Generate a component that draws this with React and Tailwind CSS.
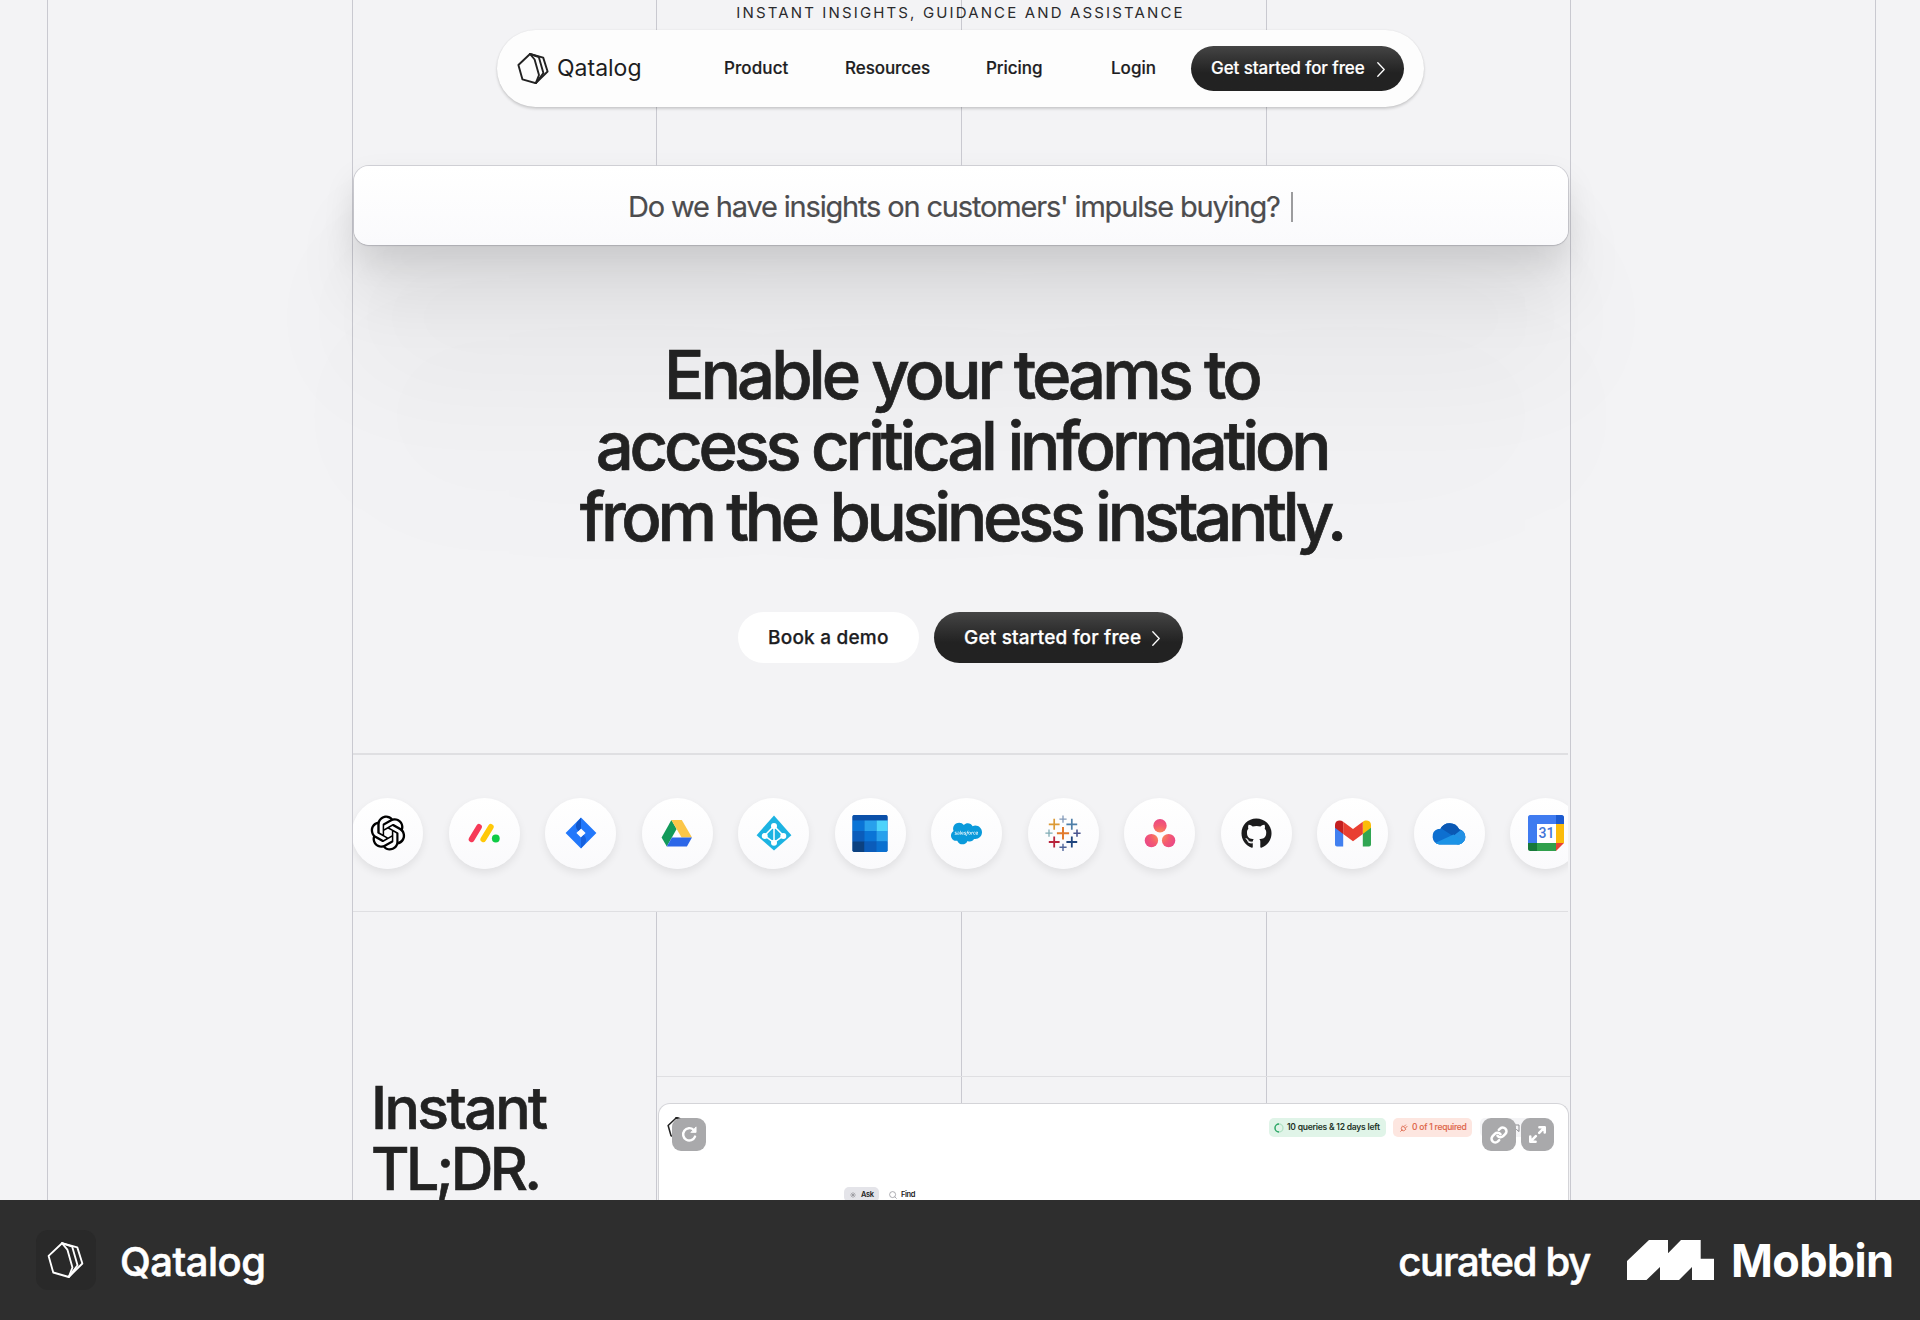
import React from "react";
import { RiOpenaiFill } from "react-icons/ri";
import { FaSalesforce, FaGithub } from "react-icons/fa";

function QatalogMark({ className, stroke = "#222", width = 1.9 }) {
  return (
    <svg viewBox="0 0 32 31" className={className} fill="none" stroke={stroke} strokeWidth={width} strokeLinejoin="round" strokeLinecap="round">
      <path d="M13 1 1.4 12 5.4 26.3 18.8 30.2 22 22 17.6 6.5z" />
      <path d="M13 1 21.8 4 26.4 20 18.8 30.2" />
      <path d="M13 1 26.2 4.6 30.6 18.5 18.8 30.2" />
    </svg>
  );
}

function Chevron({ className }) {
  return (
    <svg viewBox="0 0 8 15" className={className} fill="none" stroke="#fff" strokeWidth="1.3" strokeLinecap="round" strokeLinejoin="round">
      <path d="M0.8 0.8 7.2 7.5 0.8 14.2" />
    </svg>
  );
}

function Monday() {
  return (
    <svg viewBox="0 0 36 36" className="size-9" fill="none" strokeLinecap="round" strokeWidth="5.8">
      <path d="M5.6 24.2 13 11.9" stroke="#f63a58" />
      <path d="M17.3 24.2 24.8 11.9" stroke="#ffc808" />
      <circle cx="29.8" cy="23.5" r="3.9" fill="#0fcb45" />
    </svg>
  );
}

function Jira() {
  return (
    <svg viewBox="0 0 36 36" className="size-9">
      <path fillRule="evenodd" d="M18 2.6 33.4 18 18 33.4 2.6 18zM18 13.4 13.4 18l4.6 4.6 4.6-4.6z" fill="#2278fb" />
      <path d="M18 2.8v10.6l-2.6 2.6c-3-2.6-3-6-1.2-9z" fill="#0f55c9" />
      <path d="M18 33.2V22.6l2.6-2.6c3 2.6 3 6 1.2 9z" fill="#1761dd" />
    </svg>
  );
}

function Drive() {
  return (
    <svg viewBox="0 0 36 36" className="size-9">
      <path d="M2.6 22.5 12.4 5l5.2 9L7.8 31.5z" fill="#129a5a" />
      <path d="M12.4 5h10.4l10.2 17.5H22.6z" fill="#fbc648" />
      <path d="M7.8 31.5 12.9 22.5H33l-5.1 9z" fill="#2c67e8" />
    </svg>
  );
}

function AzureAD() {
  return (
    <svg viewBox="0 0 36 36" className="size-9">
      <path d="M18 0.6 35.4 20.2 18 35.4 0.6 20.2z" fill="#1cb3e2" />
      <g fill="none" stroke="#fff" strokeWidth="1.5">
        <path d="M18 11v17M18 11 8.5 20.7 18 27.5l9.5-6.8z" />
      </g>
      <g fill="#fff">
        <circle cx="18" cy="11" r="3" />
        <circle cx="8.7" cy="20.9" r="3" />
        <circle cx="27.3" cy="20.9" r="3" />
        <circle cx="18" cy="27.8" r="3" />
      </g>
    </svg>
  );
}

function OutlookCalendar() {
  return (
    <svg viewBox="0 0 36 37" className="h-[37px] w-9">
      <clipPath id="ocal"><rect x="0.5" width="35" height="37" rx="1.8" /></clipPath>
      <g clipPath="url(#ocal)">
        <rect width="36" height="37" fill="#0a5cba" />
        <rect width="36" height="5.5" fill="#0a4fa8" />
        <rect x="0" y="5.5" width="12.5" height="10.5" fill="#0a74d6" />
        <rect x="12.5" y="5.5" width="12" height="10.5" fill="#28a0ec" />
        <rect x="24.5" y="5.5" width="12" height="10.5" fill="#4dd3fb" />
        <rect x="0" y="16" width="12.5" height="10.5" fill="#0b5cba" />
        <rect x="12.5" y="16" width="12" height="10.5" fill="#0a74d6" />
        <rect x="24.5" y="16" width="12" height="10.5" fill="#28a0ec" />
        <rect x="0" y="26.5" width="12.5" height="11" fill="#0c4180" />
        <rect x="12.5" y="26.5" width="12" height="11" fill="#0b5cba" />
        <rect x="24.5" y="26.5" width="12" height="11" fill="#0a70d0" />
      </g>
    </svg>
  );
}

function Tableau() {
  return (
    <svg viewBox="0 0 36 36" className="size-9" fill="none">
      <path d="M18 12v12.5M11.9 18.2h12.2" stroke="#e27a2c" strokeWidth="2" />
      <path d="M9.2 3.8v11M3.8 9.3h10.8" stroke="#dc9a36" strokeWidth="1.7" />
      <path d="M26.8 3.8v11M21.4 9.3h10.8" stroke="#4e7fa8" strokeWidth="1.7" />
      <path d="M9.2 21.5v11M3.8 27h10.8" stroke="#b8243c" strokeWidth="1.8" />
      <path d="M26.8 21.5v11M21.4 27h10.8" stroke="#1f457e" strokeWidth="1.8" />
      <path d="M18 0.6v7.2M14.4 4.2h7.2" stroke="#8299b8" strokeWidth="1.3" />
      <path d="M18 28.7v7.2M14.4 32.3h7.2" stroke="#50659a" strokeWidth="1.4" />
      <path d="M4 14.6v7.2M0.4 18.2h7.2" stroke="#7fabb4" strokeWidth="1.3" />
      <path d="M32 14.6v7.2M28.4 18.2h7.2" stroke="#4a5590" strokeWidth="1.6" />
    </svg>
  );
}

function Asana() {
  return (
    <svg viewBox="0 0 36 36" className="size-9">
      <radialGradient id="asana" gradientUnits="userSpaceOnUse" cx="18" cy="20" r="16">
        <stop offset="0" stopColor="#fb9a4c" />
        <stop offset="0.6" stopColor="#f45a70" />
        <stop offset="1" stopColor="#ea4a85" />
      </radialGradient>
      <g fill="url(#asana)">
        <circle cx="18" cy="10.8" r="6.7" />
        <circle cx="9.4" cy="25.6" r="6.7" />
        <circle cx="26.6" cy="25.6" r="6.7" />
      </g>
    </svg>
  );
}

function Gmail() {
  return (
    <svg viewBox="0 0 36 36" className="size-9">
      <path d="M0 10v19.5c0 1.200.9 2 2 2h6.200V13z" fill="#4180f0" />
      <path d="M36 10v19.5c0 1.200-.9 2-2 2h-6.200V13z" fill="#30a552" />
      <path d="M27.8 6.7c3-2.6 8.200-1.2 8.200 3v3l-8.200 6.300z" fill="#fbbc08" />
      <path d="M8.2 6.7C5 4.1 0 5.5 0 9.7v3L8.2 19z" fill="#c31f20" />
      <path d="M8.2 19V6.7L18 14l9.800-7.300V19L18 26.200z" fill="#e93f32" />
    </svg>
  );
}

function OneDrive() {
  return (
    <svg viewBox="0 0 36 36" className="size-9">
      <clipPath id="cloud">
        <path d="M8.5 29.5A8 8 0 0 1 7 14c.8 0 1.7-.1 2.3-.2A10.6 10.6 0 0 1 28.2 14.2 7.8 7.8 0 0 1 28 29.5z" />
      </clipPath>
      <g clipPath="url(#cloud)">
        <rect width="36" height="36" fill="#0d6fd0" />
        <path d="M9 0h27v14l-7 2-7 5L8 12z" fill="#0a58b4" />
        <path d="M23 20.5 36 10v26h-8z" fill="#2390e4" />
        <path d="M2 29 22.5 19.5 35 28v8H2z" fill="#1c93e6" />
      </g>
    </svg>
  );
}

function GoogleCalendar() {
  return (
    <svg viewBox="0 0 36 36" className="size-9">
      <path d="M2 0h26v9H9v19H0V2c0-1 1-2 2-2z" fill="#3f7bf0" />
      <path d="M28 0h6c1 0 2 1 2 2v7h-8z" fill="#1d5bd0" />
      <path d="M28 9h8v19h-8z" fill="#fbbb0a" />
      <path d="M9 28h19v8H9z" fill="#30a04c" />
      <path d="M0 28h9v8H2c-1 0-2-1-2-2z" fill="#17793a" />
      <path d="M28 28h8l-8 8z" fill="#e84334" />
      <path d="M9 9h19v19H9z" fill="#fff" />
      <text x="18.5" y="23.3" textAnchor="middle" fontFamily="Roboto, sans-serif" fontWeight="500" fontSize="14" fill="#3f74d8">31</text>
    </svg>
  );
}

const logos = [
  <RiOpenaiFill className="size-[42px] text-black" />,
  <Monday />,
  <Jira />,
  <Drive />,
  <AzureAD />,
  <OutlookCalendar />,
  <FaSalesforce className="size-[31px] text-[#0a9adb]" />,
  <Tableau />,
  <Asana />,
  <FaGithub className="size-[31px] text-[#1b1b1c]" />,
  <Gmail />,
  <OneDrive />,
  <GoogleCalendar />,
];

function OverlayButton({ className, children }) {
  return (
    <div className={`absolute top-[14px] flex h-[33px] items-center justify-center rounded-[9px] bg-[#a9a9ab] ${className}`}>{children}</div>
  );
}

function TopSection() {
  return (
    <section className="relative h-[166px]">
      <div className="absolute inset-0 flex">
        <div className="w-[304px] border-r border-[#c9c9d0]" />
        <div className="w-[305px] border-r border-[#c9c9d0]" />
        <div className="w-[305px] border-r border-[#c9c9d0]" />
      </div>
      <div className="relative">
        <p className="pr-[2px] text-center text-[15px] leading-[25px] tracking-[2.14px] text-[#2b2b2d]">
          INSTANT INSIGHTS, GUIDANCE AND ASSISTANCE
        </p>
        <nav className="mt-[5px] ml-[144px] flex h-[77px] w-[927px] items-center rounded-full bg-[#fdfdfd] pl-[20px] text-[17px] font-medium text-[#1d1d1f] shadow-[0_2px_3px_rgba(0,0,0,0.16),0_0_2px_rgba(0,0,0,0.08)] [-webkit-text-stroke:0.2px]">
          <QatalogMark className="h-[31px] w-[32px]" />
          <span className="ml-[8px] w-[90px] text-[23px] font-normal [-webkit-text-stroke:0]">Qatalog</span>
          <span className="ml-[77px] w-[67px] tracking-[0.1px]">Product</span>
          <span className="ml-[54px] w-[87px] tracking-[-0.06px]">Resources</span>
          <span className="ml-[54px] w-[58px] tracking-[-0.05px]">Pricing</span>
          <span className="ml-[67px] w-[45px]">Login</span>
          <div className="ml-[35px] flex h-[45px] w-[213px] items-center rounded-full bg-linear-to-b from-[#454545] to-[#222] to-60% pt-px pl-[20px] text-white">
            <span className="w-[155px] tracking-[-0.08px] whitespace-nowrap">Get started for free</span>
            <Chevron className="ml-[11px] h-[15px] w-[8px]" />
          </div>
        </nav>
      </div>
    </section>
  );
}

function Hero() {
  return (
    <section className="h-[587px]">
      <div className="ml-px flex h-[79px] w-[1214px] items-center rounded-[15px] bg-linear-to-b from-white to-[#fafafc] pt-[3px] pl-[274px] shadow-[0_0_0_1px_rgba(150,150,160,0.35),0_210px_190px_rgba(0,0,0,0.035),0_112px_130px_rgba(0,0,0,0.06),0_52px_64px_rgba(0,0,0,0.08),0_15px_32px_rgba(0,0,0,0.1),0_1px_2px_rgba(0,0,0,0.1)]">
        <span className="w-[657px] text-[29px] tracking-[-1.17px] whitespace-nowrap text-[#4c4c4e] [-webkit-text-stroke:0.2px]">
          Do we have insights on customers' impulse buying?
        </span>
        <span className="ml-[6px] h-[30px] w-[2px] bg-[#9c9c9e]" />
      </div>
      <h1 className="pt-[94px] text-center text-[67px] leading-[71px] font-medium whitespace-nowrap text-[#222] [-webkit-text-stroke:0.7px]">
        <span className="block tracking-[-3.88px]">Enable your teams to</span>
        <span className="block tracking-[-4.2px]">access critical information</span>
        <span className="block tracking-[-4.3px]">from the business instantly.</span>
      </h1>
      <div className="mt-[60px] flex gap-[15px] pl-[385px] text-[19px] font-medium [-webkit-text-stroke:0.25px]">
        <div className="flex h-[51px] w-[181px] items-center rounded-full bg-white pt-[2px] pl-[30px] tracking-[0.22px] text-[#1d1d1f]">
          Book a demo
        </div>
        <div className="flex h-[51px] w-[249px] items-center rounded-full bg-linear-to-b from-[#454545] to-[#222] to-60% pt-[2px] pl-[30px] text-white">
          <span className="w-[178px] tracking-[0.19px] whitespace-nowrap">Get started for free</span>
          <Chevron className="ml-[10px] h-[15px] w-[8px]" />
        </div>
      </div>
    </section>
  );
}

function LogoStrip() {
  return (
    <section className="h-[159px] w-[1215px] overflow-hidden border-t-2 border-b border-[#dfdfe2]">
      <div className="-ml-px flex h-full items-center gap-[25.5px]">
        {logos.map((logo, i) => (
          <div key={i} className="flex size-[71px] shrink-0 items-center justify-center rounded-full bg-linear-to-b from-white to-[#fafafc] shadow-[0_4px_8px_rgba(0,0,0,0.08)]">
            {logo}
          </div>
        ))}
      </div>
    </section>
  );
}

function Guides({ className }) {
  return (
    <div className={`flex ${className}`}>
      <div className="w-[305px] border-r border-[#c9c9d0]" />
      <div className="w-[305px] border-r border-[#c9c9d0]" />
    </div>
  );
}

function DemoCard() {
  return (
    <div className="relative ml-px h-[97px] w-[911px] rounded-t-[12px] border border-b-0 border-[#d4d4d8] bg-white">
      <div className="flex h-[47px] items-center pl-[8px]">
        <QatalogMark className="h-[22px] w-[23px]" width={2.2} />
        <div className="ml-[579px] flex h-[19px] w-[117px] items-center rounded-[5px] bg-[#e0f4e8] pl-[5px] text-[8.5px] font-semibold tracking-[-0.22px] whitespace-nowrap text-[#1d3327]">
          <svg viewBox="0 0 10 10" className="mr-[3px] size-[10px]" fill="none" strokeWidth="1.4">
            <circle cx="5" cy="5" r="4" stroke="#b4e2c6" />
            <path d="M5 1A4 4 0 0 0 5 9" stroke="#2fa868" />
          </svg>
          10 queries &amp; 12 days left
        </div>
        <div className="ml-[7px] flex h-[19px] w-[79px] items-center rounded-[5px] bg-[#fde6e0] pl-[7px] text-[8.5px] font-medium tracking-[-0.24px] whitespace-nowrap text-[#dd6549] [-webkit-text-stroke:0.1px]">
          <svg viewBox="0 0 10 10" className="mr-[4px] size-[8px] shrink-0" fill="none" stroke="#dd6549" strokeWidth="1.1" strokeLinecap="round">
            <path d="M0.8 9.2 2.6 7.400M3.600 2.600 7.400 6.400 6 7.800a2.700 2.700 0 0 1-3.800-3.800zM5.200 3 7 1.200M7 4.800 8.800 3" />
          </svg>
          0 of 1 required
        </div>
        <div className="ml-[8px] flex h-[19px] w-[72px] items-center rounded-[5px] bg-[#f4f4f6] pl-[32px]">
          <svg viewBox="0 0 8 8" className="size-[8px]" fill="none" stroke="#8d8d91" strokeWidth="1">
            <path d="M1 1h6v6.5L4.5 5.5H1z" />
          </svg>
        </div>
      </div>
      <OverlayButton className="left-[13px] w-[34px]">
        <svg viewBox="0 0 16 16" className="size-[17px]" fill="none" stroke="#fff" strokeWidth="2.3" strokeLinecap="round" strokeLinejoin="round">
          <path d="M13.2 10A5.8 5.8 0 1 1 11.8 3.6" />
          <path d="M14.2 1.2V6H9.6z" fill="#fff" strokeWidth="0.8" />
        </svg>
      </OverlayButton>
      <OverlayButton className="left-[823px] w-[34px]">
        <svg viewBox="0 0 24 24" className="size-[18px]" fill="none" stroke="#fff" strokeWidth="3.4" strokeLinecap="round" strokeLinejoin="round">
          <path d="M10 13a5 5 0 0 0 7.54.54l3-3a5 5 0 0 0-7.07-7.07l-1.72 1.71" />
          <path d="M14 11a5 5 0 0 0-7.54-.54l-3 3a5 5 0 0 0 7.07 7.07l1.71-1.71" />
        </svg>
      </OverlayButton>
      <OverlayButton className="left-[862px] w-[33px]">
        <svg viewBox="0 0 16 16" className="size-[17px]" fill="none" stroke="#fff" strokeWidth="2.4" strokeLinecap="round" strokeLinejoin="round">
          <path d="M9.8 1.2h5v5M14.4 1.6 9.6 6.4M6.2 14.8h-5v-5M1.6 14.4l4.800-4.800" />
        </svg>
      </OverlayButton>
      <div className="mt-[36px] ml-[185px] flex h-[13px] items-start text-[7.5px] leading-[13px] font-semibold tracking-[-0.4px] text-[#222]">
        <div className="flex h-[15px] w-[35px] items-center rounded-[5px] bg-[#e4e4e9] pl-[6px]">
          <svg viewBox="0 0 8 8" className="mr-[5px] size-[6px]" stroke="#8b8b92" strokeWidth="0.8">
            <path d="M4 0v8M0 4h8M1.2 1.2l5.600 5.600M6.8 1.2 1.2 6.8" />
          </svg>
          Ask
        </div>
        <div className="ml-[10px] flex h-[15px] items-center">
          <svg viewBox="0 0 8 8" className="mr-[4px] size-[8px]" fill="none" stroke="#8b8b92" strokeWidth="0.7">
            <circle cx="3.6" cy="3.6" r="3" />
            <path d="M5.8 5.8 7.7 7.7" />
          </svg>
          Find
        </div>
      </div>
    </div>
  );
}

function FeatureSection() {
  return (
    <section className="flex h-[288px] overflow-hidden">
      <div className="w-[304px] shrink-0 border-r border-[#c9c9d0] pt-[165px] pl-[18px] text-[59px] leading-[61px] font-medium text-[#222] [-webkit-text-stroke:0.6px]">
        <h2>
          <span className="block tracking-[-2.6px]">Instant</span>
          <span className="block tracking-[-3.6px]">TL;DR.</span>
        </h2>
      </div>
      <div className="w-[913px]">
        <Guides className="h-[165px] border-b border-[#dfdfe2]" />
        <Guides className="h-[26px]" />
        <DemoCard />
      </div>
    </section>
  );
}

function Footer() {
  return (
    <footer className="flex h-[120px] items-center bg-[#2e2e2e] text-[40px] font-medium text-white">
      <div className="ml-[36px] flex size-[60px] items-center justify-center rounded-[12px] bg-[#292929]">
        <QatalogMark className="mr-[2px] h-[36px] w-[37px]" stroke="#fff" width={1.6} />
      </div>
      <span className="ml-[24px] pt-[3px] tracking-[-0.5px] [-webkit-text-stroke:0.6px]">Qatalog</span>
      <span className="mr-[37px] ml-auto pt-[3px] tracking-[-1.25px] [-webkit-text-stroke:0.6px]">curated by</span>
      <svg viewBox="0 0 87 40" className="h-[40px] w-[87px]" fill="#fff">
        <path d="M0 21 22 0H41V13.3L54 0H73.7V18.7H87V40H65V27L52 40H33V27L19.5 40H0z" />
      </svg>
      <span className="mr-[26px] ml-[17px] w-[163px] pt-px text-[45px] font-bold tracking-[-0.69px]">Mobbin</span>
    </footer>
  );
}

export default function App() {
  return (
    <div className="h-[1320px] w-[1920px] overflow-hidden bg-[#f3f3f5] font-['Inter',sans-serif]">
      <main className="flex h-[1200px] pl-[47px]">
        <div className="w-[305px] border-l border-[#c9c9d0]" />
        <div className="w-[1219px] border-x border-[#c9c9d0]">
          <TopSection />
          <Hero />
          <LogoStrip />
          <FeatureSection />
        </div>
        <div className="w-[305px] border-r border-[#c9c9d0]" />
      </main>
      <Footer />
    </div>
  );
}
